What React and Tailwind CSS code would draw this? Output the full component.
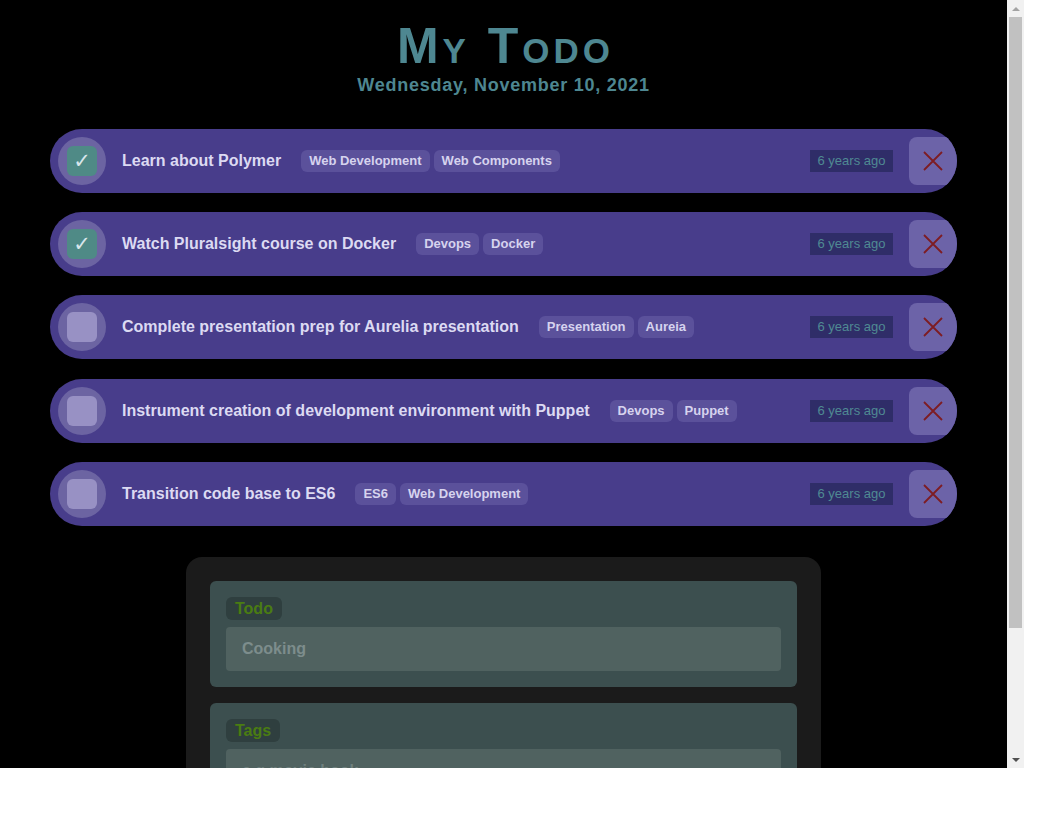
const todos = [
  { title: "Learn about Polymer", tags: ["Web Development", "Web Components"], done: true },
  { title: "Watch Pluralsight course on Docker", tags: ["Devops", "Docker"], done: true },
  { title: "Complete presentation prep for Aurelia presentation", tags: ["Presentation", "Aureia"], done: false },
  { title: "Instrument creation of development environment with Puppet", tags: ["Devops", "Puppet"], done: false },
  { title: "Transition code base to ES6", tags: ["ES6", "Web Development"], done: false },
];

function TodoRow({ todo }) {
  return (
    <div className="w-[907px] h-16 mx-auto rounded-full bg-[#483d8b] overflow-hidden flex items-center pl-2">
      <div className="w-12 h-12 rounded-full bg-[#6c64a2] flex items-center justify-center shrink-0">
        <div
          className={`w-[30px] h-[30px] rounded-md flex items-center justify-center ${
            todo.done ? "bg-[#4f8a86]" : "bg-[#9891c4]"
          }`}
        >
          {todo.done && (
            <span className="text-[21px] leading-none text-[#d8e6ec] font-['DejaVu_Sans',sans-serif]">✓</span>
          )}
        </div>
      </div>
      <span className="ml-4 text-base font-bold text-[#dcdaf2] whitespace-nowrap">{todo.title}</span>
      <div className="ml-5 flex gap-1">
        {todo.tags.map((t) => (
          <span
            key={t}
            className="h-[22px] px-2 rounded-md bg-[#5b519b] text-[13px] font-bold text-[#d6d3ee] leading-[22px] whitespace-nowrap"
          >
            {t}
          </span>
        ))}
      </div>
      <div className="ml-auto h-[22px] w-[83px] bg-[#2f2d68] text-[13px] text-[#4f8a93] leading-[22px] text-center">
        6 years ago
      </div>
      <div className="ml-4 w-12 h-12 rounded-l-lg bg-[#6c63a8] flex items-center justify-center shrink-0">
        <svg width="22" height="22" viewBox="0 0 22 22">
          <path d="M2 2 L20 20 M20 2 L2 20" stroke="#7e1c22" strokeWidth="1.8" />
        </svg>
      </div>
    </div>
  );
}

function Field({ label, value, placeholder }) {
  return (
    <div className="rounded-md bg-[#3c4f4f] p-4">
      <span className="inline-block h-[23px] px-[9px] rounded-md bg-[#2f3f3f] text-base font-bold text-[#4a7c12] leading-[23px]">
        {label}
      </span>
      <div className="mt-[6px] h-11 rounded bg-[#506260] px-4 flex items-center text-base font-bold">
        {value ? (
          <span className="text-[#7d8d8c]">{value}</span>
        ) : (
          <span className="text-[#6f807e]">{placeholder}</span>
        )}
      </div>
    </div>
  );
}

export default function App() {
  return (
    <div className="w-[1040px] h-[816px] bg-white font-['Liberation_Sans',Arial,sans-serif]">
      <div className="w-[1024px] h-[768px] flex">
        <div className="w-[1007px] h-[768px] bg-black overflow-hidden">
          <h1 className="mt-[21px] pl-[4px] text-center text-[50px] leading-[50px] font-bold text-[#4e8791] tracking-[4px] [font-variant:small-caps]">
            My Todo
          </h1>
          <div className="mt-[2px] text-center text-lg leading-6 font-bold text-[#4e8791] tracking-[0.75px]">
            Wednesday, November 10, 2021
          </div>
          <div className="mt-8 flex flex-col gap-[19.2px]">
            {todos.map((t) => (
              <TodoRow key={t.title} todo={t} />
            ))}
          </div>
          <div className="mt-[31px] mx-auto w-[635px] rounded-t-2xl bg-[#1b1b1b] p-6 flex flex-col gap-4 h-[300px]">
            <Field label="Todo" value="Cooking" />
            <Field label="Tags" placeholder="e.g movie,book" />
          </div>
        </div>
        <div className="w-[17px] h-[768px] bg-[#f1f1f1] flex flex-col items-center">
          <div className="h-[17px] flex items-center justify-center">
            <div className="w-0 h-0 border-l-4 border-r-4 border-b-4 border-l-transparent border-r-transparent border-b-[#a3a3a3]" />
          </div>
          <div className="w-[13px] h-[611px] bg-[#c1c1c1]" />
          <div className="flex-1" />
          <div className="h-[17px] flex items-center justify-center">
            <div className="w-0 h-0 border-l-4 border-r-4 border-t-4 border-l-transparent border-r-transparent border-t-[#505050]" />
          </div>
        </div>
      </div>
    </div>
  );
}
